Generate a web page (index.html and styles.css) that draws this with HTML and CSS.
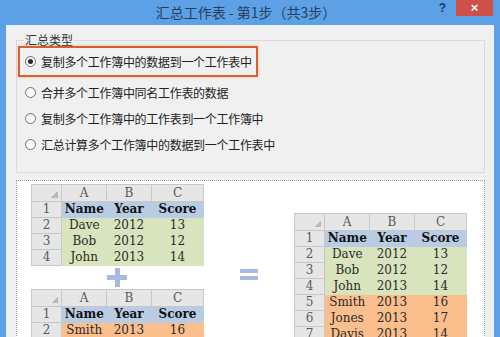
FILE: index.html
```html
<!DOCTYPE html>
<html lang="zh-CN">
<head>
    <meta charset="UTF-8">
    <meta name="viewport" content="width=device-width, initial-scale=1.0">
    <title>汇总工作表</title>
    <link rel="stylesheet" href="styles.css">
</head>
<body>

    <div class="window">
        <!-- Title Bar -->
        <div class="titlebar">
            <div></div>
            <div class="title">汇总工作表 - 第1步（共3步）</div>
            <div class="controls">
                <span class="help">?</span>
                <span class="close">×</span>
            </div>
        </div>

        <div class="dialog">
            <!-- Summary type -->
            <fieldset class="group">
                <legend>汇总类型</legend>
                <label class="option selected"><span class="radio checked"></span>复制多个工作簿中的数据到一个工作表中</label>
                <label class="option second"><span class="radio"></span>合并多个工作簿中同名工作表的数据</label>
                <label class="option"><span class="radio"></span>复制多个工作簿中的工作表到一个工作簿中</label>
                <label class="option"><span class="radio"></span>汇总计算多个工作簿中的数据到一个工作表中</label>
            </fieldset>

            <!-- Preview -->
            <div class="preview">
                <div class="sources">
                    <table class="sheet">
                        <colgroup><col class="c0"><col class="c1"><col class="c2"><col class="c3"></colgroup>
                        <tr class="cols"><th class="corner"></th><th>A</th><th>B</th><th>C</th></tr>
                        <tr><th>1</th><td class="hd">Name</td><td class="hd">Year</td><td class="hd">Score</td></tr>
                        <tr><th>2</th><td class="g">Dave</td><td class="g">2012</td><td class="g">13</td></tr>
                        <tr><th>3</th><td class="g">Bob</td><td class="g">2012</td><td class="g">12</td></tr>
                        <tr><th>4</th><td class="g">John</td><td class="g">2013</td><td class="g">14</td></tr>
                    </table>

                    <div class="plus"><span class="bar-h"></span><span class="bar-v"></span></div>

                    <table class="sheet">
                        <colgroup><col class="c0"><col class="c1"><col class="c2"><col class="c3"></colgroup>
                        <tr class="cols"><th class="corner"></th><th>A</th><th>B</th><th>C</th></tr>
                        <tr><th>1</th><td class="hd">Name</td><td class="hd">Year</td><td class="hd">Score</td></tr>
                        <tr><th>2</th><td class="o">Smith</td><td class="o">2013</td><td class="o">16</td></tr>
                        <tr><th>3</th><td class="o">Jones</td><td class="o">2013</td><td class="o">17</td></tr>
                        <tr><th>4</th><td class="o">Davis</td><td class="o">2013</td><td class="o">14</td></tr>
                    </table>
                </div>

                <div class="equals"><span></span><span></span></div>

                <table class="sheet result">
                    <colgroup><col class="c0"><col class="c1"><col class="c2"><col class="c3"></colgroup>
                    <tr class="cols"><th class="corner"></th><th>A</th><th>B</th><th>C</th></tr>
                    <tr><th>1</th><td class="hd">Name</td><td class="hd">Year</td><td class="hd">Score</td></tr>
                    <tr><th>2</th><td class="g">Dave</td><td class="g">2012</td><td class="g">13</td></tr>
                    <tr><th>3</th><td class="g">Bob</td><td class="g">2012</td><td class="g">12</td></tr>
                    <tr><th>4</th><td class="g">John</td><td class="g">2013</td><td class="g">14</td></tr>
                    <tr><th>5</th><td class="o">Smith</td><td class="o">2013</td><td class="o">16</td></tr>
                    <tr><th>6</th><td class="o">Jones</td><td class="o">2013</td><td class="o">17</td></tr>
                    <tr><th>7</th><td class="o">Davis</td><td class="o">2013</td><td class="o">14</td></tr>
                </table>
            </div>
        </div>
    </div>

</body>
</html>
```

FILE: styles.css
```css
* {
    margin: 0;
    padding: 0;
    box-sizing: border-box;
    font-family: "Noto Sans CJK SC", "Noto Sans", sans-serif;
}

body {
    width: 500px;
    height: 337px;
    overflow: hidden;
    background-color: #5ca0e6;
}

.window {
    display: flex;
    flex-direction: column;
    height: 100%;
}

/* Title Bar */
.titlebar {
    display: grid;
    grid-template-columns: 1fr auto 1fr;
    height: 25px;
    flex-shrink: 0;
}

.title {
    font-size: 14px;
    line-height: 24px;
    color: #26405c;
    margin-right: 8px;
}

.controls {
    display: flex;
    justify-content: flex-end;
    align-items: flex-start;
    padding-right: 7px;
}

.help {
    font-family: "Liberation Sans", sans-serif;
    font-size: 12px;
    font-weight: bold;
    line-height: 17px;
    color: #1f3a58;
    margin-right: 10px;
}

.close {
    width: 37px;
    height: 16px;
    background-color: #cf4f49;
    color: white;
    font-family: "Liberation Sans", sans-serif;
    font-size: 13px;
    line-height: 16px;
    text-align: center;
    font-weight: bold;
}

/* Dialog body */
.dialog {
    flex: 1;
    margin: 0 6px;
    padding: 9px 9px 0 10px;
    background-color: #f0f0f0;
    overflow: hidden;
}

.group {
    border: 1px solid #dadada;
    padding: 0 0 15px 1px;
}

.group legend {
    margin-left: 6px;
    padding: 0 1px;
    font-size: 12px;
    line-height: 12px;
    color: #333;
}

.option {
    display: flex;
    align-items: center;
    width: fit-content;
    height: 26px;
    padding: 0 4px 0 5px;
    border: 2px solid transparent;
    font-size: 12px;
    letter-spacing: -0.3px;
    color: #222;
}

.option.selected {
    height: 31px;
    border-color: #d5612f;
    box-shadow: 0 0 3px rgba(213, 97, 47, 0.35);
}

.option.second {
    margin-top: 2px;
}

.radio {
    display: flex;
    align-items: center;
    justify-content: center;
    width: 11px;
    height: 11px;
    margin-right: 5px;
    border: 1px solid #6f6f6f;
    border-radius: 50%;
    background: linear-gradient(#f4f4f4, #ffffff);
}

.radio.checked::after {
    content: "";
    width: 5px;
    height: 5px;
    border-radius: 50%;
    background-color: #2a2a2a;
}

/* Preview */
.preview {
    display: flex;
    align-items: flex-start;
    height: 200px;
    margin-top: 7px;
    padding: 3px 0 0 14px;
    border: 1px dotted #9c9c9c;
    background-color: #fff;
}

.sources {
    width: 172px;
}

.sheet {
    width: 172px;
    border-collapse: collapse;
    table-layout: fixed;
}

.sheet .c0 { width: 30px; }
.sheet .c1 { width: 45px; }
.sheet .c2 { width: 45px; }
.sheet .c3 { width: 52px; }

.sheet tr {
    height: 16px;
}

.sheet tr.cols {
    height: 17px;
}

.sheet th,
.sheet td {
    padding: 0;
    font-family: "DejaVu Serif", "Liberation Serif", serif;
    font-size: 12px;
    line-height: 15px;
    text-align: center;
    white-space: nowrap;
    color: #2a2a2a;
}

.sheet th {
    font-weight: normal;
    color: #5a5a5a;
    background-color: #e6e6e6;
    border: 1px solid #c8c8c8;
}

.sheet th.corner {
    background: linear-gradient(135deg, transparent 50%, #b9b9b9 50%) no-repeat right 3px bottom 3px / 7px 7px, #e6e6e6;
}

.sheet td.hd {
    background-color: #b8cce4;
    font-weight: bold;
    color: #111;
}

.sheet td.g {
    background-color: #d8e4bd;
}

.sheet td.o {
    background-color: #fbbf8e;
}

.plus {
    display: grid;
    place-items: center;
    width: 20px;
    height: 19px;
    margin: 2px auto;
}

.plus span {
    grid-area: 1 / 1;
    background-color: #a7badf;
}

.plus .bar-h {
    width: 20px;
    height: 5px;
}

.plus .bar-v {
    width: 5px;
    height: 19px;
}

.equals {
    display: flex;
    flex-direction: column;
    align-items: center;
    gap: 3px;
    width: 91px;
    margin-top: 85px;
}

.equals span {
    width: 18px;
    height: 4px;
    background-color: #a7badf;
}

.result {
    margin-top: 29px;
}
```
